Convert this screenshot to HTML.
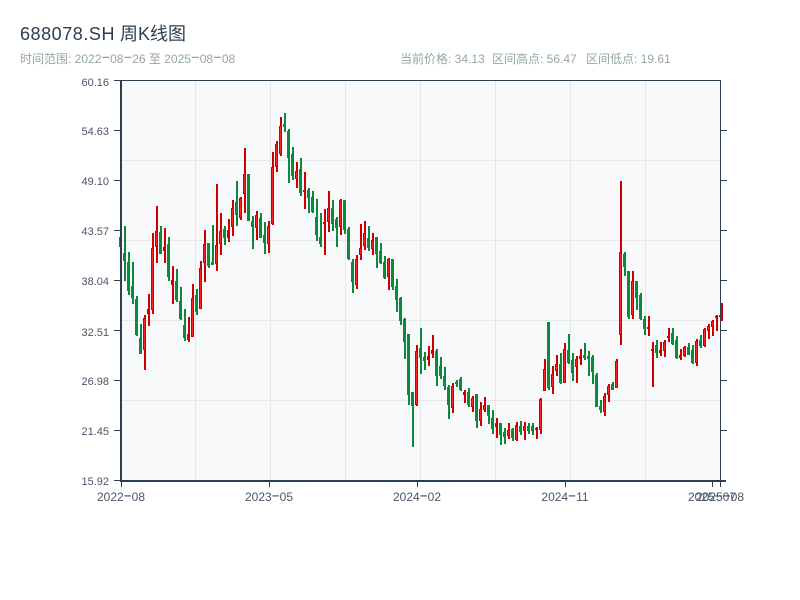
<!DOCTYPE html>
<html lang="zh">
<head>
<meta charset="utf-8">
<title>688078.SH 周K线图</title>
<style>
html,body{margin:0;padding:0;background:#fff;width:800px;height:600px;overflow:hidden}
svg{display:block;position:absolute;left:0;top:0}
text{font-family:"Liberation Sans","WenQuanYi Zen Hei","Noto Sans CJK SC",sans-serif}
.h{font-family:"IPAGothic",sans-serif;font-size:16px}
.k{font-family:"IPAGothic",sans-serif;font-size:17.5px}
</style>
</head>
<body>
<svg width="800" height="600" viewBox="0 0 800 600" xmlns="http://www.w3.org/2000/svg">
<text x="20" y="40" font-size="18" fill="#2c3e50"><tspan letter-spacing="0.55">688078.SH</tspan> 周K线图</text>
<text x="20" y="63" font-size="12" fill="#95a5a6">时间范围: 2022<tspan class="k" dy="1">-</tspan><tspan dy="-1">08</tspan><tspan class="k" dy="1">-</tspan><tspan dy="-1">26 至 2025</tspan><tspan class="k" dy="1">-</tspan><tspan dy="-1">08</tspan><tspan class="k" dy="1">-</tspan><tspan dy="-1">08</tspan></text>
<text x="400" y="63" font-size="12" fill="#95a5a6">当前价格: 34.13</text>
<text x="492" y="63" font-size="12" fill="#95a5a6">区间高点: 56.47</text>
<text x="586" y="63" font-size="12" fill="#95a5a6">区间低点: 19.61</text>

<rect x="120" y="80" width="600" height="400" fill="#f8f9fa"/>
<path d="M120 160.5H720M120 240.5H720M120 320.5H720M120 400.5H720M195.5 80V480M270.5 80V480M345.5 80V480M420.5 80V480M495.5 80V480M570.5 80V480M645.5 80V480" stroke="#e5e7eb" stroke-width="1" fill="none"/>

<g shape-rendering="crispEdges">
<path fill="#0a8a3c" d="M119 237h3V247h-3z
M124 226h2V281h-2zM123 253h3V261h-3z
M128 252h2V295h-2zM127 262h3V291h-3z
M132 262h2V304h-2zM131 286h3V298h-3z
M136 296h2V336h-2zM135 299h3V335h-3z
M140 324h2V354h-2zM139 338h3V354h-3z
M160 226h2V254h-2zM159 232h3V254h-3z
M168 237h2V281h-2zM167 244h3V277h-3z
M176 269h2V302h-2zM175 281h3V300h-3z
M180 287h2V320h-2zM179 301h3V319h-3z
M184 309h2V341h-2zM183 325h3V338h-3z
M196 289h2V315h-2zM195 295h3V312h-3z
M208 243h2V268h-2zM207 243h3V266h-3z
M212 225h2V265h-2zM211 262h3V265h-3z
M224 226h2V245h-2zM223 229h3V238h-3z
M236 181h2V226h-2zM235 202h3V215h-3z
M248 174h2V221h-2zM247 174h3V221h-3z
M252 216h2V249h-2zM251 221h3V227h-3z
M260 213h2V238h-2zM259 218h3V238h-3z
M264 222h2V254h-2zM263 235h3V243h-3z
M284 113h2V132h-2zM283 124h3V127h-3z
M288 129h2V183h-2zM287 131h3V158h-3z
M292 147h2V180h-2zM291 154h3V176h-3z
M300 158h2V196h-2zM299 169h3V193h-3z
M308 188h2V213h-2zM307 190h3V198h-3z
M312 191h2V213h-2zM311 197h3V212h-3z
M316 199h2V241h-2zM315 217h3V235h-3z
M320 213h2V247h-2zM319 237h3V244h-3z
M332 200h2V231h-2zM331 208h3V224h-3z
M336 217h2V247h-2zM335 219h3V228h-3z
M344 200h2V234h-2zM343 200h3V230h-3z
M348 227h2V260h-2zM347 229h3V259h-3z
M352 259h2V293h-2zM351 262h3V282h-3z
M368 226h2V251h-2zM367 238h3V248h-3z
M376 237h2V268h-2zM375 237h3V254h-3z
M380 243h2V264h-2zM379 251h3V263h-3z
M384 256h2V279h-2zM383 262h3V278h-3z
M392 259h2V290h-2zM391 259h3V287h-3z
M396 279h2V312h-2zM395 286h3V300h-3z
M400 297h2V325h-2zM399 298h3V321h-3z
M404 318h2V359h-2zM403 319h3V342h-3z
M408 334h2V405h-2zM407 334h3V395h-3z
M412 392h2V447h-2zM411 392h3V406h-3z
M420 328h2V374h-2zM419 348h3V358h-3z
M424 352h2V370h-2zM423 357h3V361h-3z
M436 349h2V386h-2zM435 351h3V376h-3z
M440 357h2V379h-2zM439 366h3V376h-3z
M444 367h2V390h-2zM443 376h3V386h-3z
M448 385h2V419h-2zM447 387h3V405h-3z
M456 380h2V387h-2zM455 382h3V384h-3z
M460 377h2V391h-2zM459 379h3V390h-3z
M468 388h2V407h-2zM467 392h3V405h-3z
M476 394h2V428h-2zM475 394h3V421h-3z
M488 405h2V424h-2zM487 405h3V416h-3z
M492 410h2V434h-2zM491 418h3V429h-3z
M500 423h2V445h-2zM499 423h3V435h-3z
M504 428h2V444h-2zM503 432h3V437h-3z
M512 428h2V441h-2zM511 429h3V438h-3z
M520 421h2V435h-2zM519 426h3V432h-3z
M528 423h2V434h-2zM527 426h3V431h-3z
M532 423h2V435h-2zM531 426h3V431h-3z
M548 322h2V390h-2zM547 322h3V388h-3z
M560 353h2V384h-2zM559 364h3V383h-3z
M568 334h2V364h-2zM567 350h3V363h-3z
M572 353h2V381h-2zM571 360h3V373h-3z
M584 343h2V360h-2zM583 355h3V358h-3z
M588 351h2V376h-2zM587 356h3V359h-3z
M592 355h2V384h-2zM591 357h3V372h-3z
M596 373h2V407h-2zM595 375h3V407h-3z
M600 400h2V413h-2zM599 406h3V410h-3z
M612 382h2V390h-2zM611 384h3V390h-3z
M624 252h2V276h-2zM623 254h3V267h-3z
M628 271h2V319h-2zM627 271h3V317h-3z
M636 281h2V310h-2zM635 281h3V298h-3z
M640 293h2V320h-2zM639 295h3V319h-3z
M644 316h2V335h-2zM643 319h3V329h-3z
M656 340h2V358h-2zM655 345h3V353h-3z
M672 328h2V345h-2zM671 333h3V344h-3z
M676 336h2V359h-2zM675 340h3V358h-3z
M688 343h2V355h-2zM687 347h3V355h-3z
M692 345h2V364h-2zM691 350h3V363h-3z
M700 335h2V348h-2zM699 340h3V346h-3z"/>
<path fill="#cc0000" d="M144 315h2V370h-2zM143 318h3V350h-3z
M148 294h2V326h-2zM147 309h3V314h-3z
M152 233h2V314h-2zM151 248h3V310h-3z
M156 206h2V263h-2zM155 231h3V247h-3z
M164 228h2V263h-2zM163 247h3V251h-3z
M172 266h2V304h-2zM171 280h3V285h-3z
M188 317h2V342h-2zM187 334h3V340h-3z
M192 284h2V337h-2zM191 298h3V337h-3z
M200 261h2V309h-2zM199 268h3V309h-3z
M204 230h2V282h-2zM203 244h3V263h-3z
M216 184h2V271h-2zM215 245h3V264h-3z
M220 213h2V255h-2zM219 231h3V244h-3z
M228 219h2V242h-2zM227 230h3V238h-3z
M232 200h2V236h-2zM231 208h3V227h-3z
M240 197h2V220h-2zM239 198h3V218h-3z
M244 148h2V213h-2zM243 174h3V194h-3z
M256 211h2V240h-2zM255 215h3V228h-3z
M268 221h2V253h-2zM267 226h3V244h-3z
M272 152h2V225h-2zM271 167h3V224h-3z
M276 141h2V172h-2zM275 144h3V167h-3z
M280 117h2V156h-2zM279 126h3V154h-3z
M296 162h2V188h-2zM295 171h3V179h-3z
M304 172h2V209h-2zM303 190h3V192h-3z
M324 209h2V255h-2zM323 222h3V224h-3z
M328 191h2V232h-2zM327 208h3V222h-3z
M340 199h2V235h-2zM339 200h3V227h-3z
M356 255h2V289h-2zM355 259h3V285h-3z
M360 224h2V260h-2zM359 248h3V255h-3z
M364 221h2V250h-2zM363 233h3V246h-3z
M372 233h2V255h-2zM371 240h3V249h-3z
M388 258h2V290h-2zM387 259h3V277h-3z
M416 345h2V406h-2zM415 351h3V405h-3z
M428 346h2V366h-2zM427 356h3V360h-3z
M432 335h2V358h-2zM431 350h3V354h-3z
M452 383h2V413h-2zM451 386h3V408h-3z
M464 390h2V403h-2zM463 392h3V395h-3z
M472 396h2V412h-2zM471 398h3V407h-3z
M480 402h2V426h-2zM479 409h3V421h-3z
M484 397h2V412h-2zM483 405h3V410h-3z
M496 418h2V438h-2zM495 423h3V427h-3z
M508 423h2V439h-2zM507 430h3V436h-3z
M516 422h2V441h-2zM515 425h3V440h-3z
M524 422h2V440h-2zM523 426h3V431h-3z
M536 427h2V439h-2zM535 428h3V430h-3z
M540 398h2V434h-2zM539 399h3V430h-3z
M544 359h2V391h-2zM543 369h3V391h-3z
M552 366h2V394h-2zM551 374h3V387h-3z
M556 355h2V376h-2zM555 364h3V371h-3z
M564 343h2V383h-2zM563 349h3V383h-3z
M576 356h2V383h-2zM575 359h3V367h-3z
M580 349h2V365h-2zM579 356h3V359h-3z
M604 393h2V416h-2zM603 396h3V412h-3z
M608 384h2V402h-2zM607 386h3V395h-3z
M616 359h2V388h-2zM615 361h3V388h-3z
M620 181h2V345h-2zM619 252h3V335h-3z
M632 271h2V319h-2zM631 281h3V315h-3z
M648 316h2V336h-2zM647 327h3V329h-3z
M652 342h2V387h-2zM651 349h3V351h-3z
M660 342h2V356h-2zM659 350h3V353h-3z
M664 340h2V357h-2zM663 342h3V351h-3z
M668 328h2V342h-2zM667 336h3V338h-3z
M680 349h2V360h-2zM679 355h3V358h-3z
M684 346h2V357h-2zM683 347h3V356h-3z
M696 339h2V366h-2zM695 341h3V363h-3z
M704 328h2V347h-2zM703 329h3V346h-3z
M708 324h2V339h-2zM707 326h3V331h-3z
M712 320h2V336h-2zM711 321h3V327h-3z
M716 315h2V331h-2zM715 316h3V318h-3z
M721 303h2V321h-2zM719 315h3V317h-3z"/>
<path fill="#ff2222" d="M144 319h1V349h-1zM152 249h1V309h-1zM156 232h1V246h-1zM192 299h1V336h-1zM200 269h1V308h-1zM204 245h1V262h-1zM216 246h1V263h-1zM220 232h1V243h-1zM232 209h1V226h-1zM240 199h1V217h-1zM244 175h1V193h-1zM256 216h1V227h-1zM268 227h1V243h-1zM272 168h1V223h-1zM276 145h1V166h-1zM280 127h1V153h-1zM296 172h1V178h-1zM328 209h1V221h-1zM340 201h1V226h-1zM356 260h1V284h-1zM360 249h1V254h-1zM364 234h1V245h-1zM372 241h1V248h-1zM388 260h1V276h-1zM416 352h1V404h-1zM452 387h1V407h-1zM472 399h1V406h-1zM480 410h1V420h-1zM484 406h1V409h-1zM508 431h1V435h-1zM516 426h1V439h-1zM524 427h1V430h-1zM540 400h1V429h-1zM544 370h1V390h-1zM552 375h1V386h-1zM556 365h1V370h-1zM564 350h1V382h-1zM576 360h1V366h-1zM604 397h1V411h-1zM608 387h1V394h-1zM616 362h1V387h-1zM620 253h1V334h-1zM632 282h1V314h-1zM664 343h1V350h-1zM684 348h1V355h-1zM696 342h1V362h-1zM704 330h1V345h-1zM708 327h1V330h-1zM712 322h1V326h-1z"/>
</g>

<g shape-rendering="crispEdges" fill="#2c3e50">
<rect x="120" y="80" width="601" height="1"/>
<rect x="120" y="80" width="2" height="402"/>
<rect x="120" y="480" width="606" height="2"/>
<rect x="720" y="80" width="1" height="401"/>
<path d="M114 80h6v1h-6zM114 130h6v1h-6zM114 180h6v1h-6zM114 230h6v1h-6zM114 280h6v1h-6zM114 330h6v1h-6zM114 380h6v1h-6zM114 430h6v1h-6zM114 480h6v1h-6z"/>
<path d="M721 130h6v1h-6zM721 180h6v1h-6zM721 230h6v1h-6zM721 280h6v1h-6zM721 330h6v1h-6zM721 380h6v1h-6zM721 430h6v1h-6z"/>
<path d="M121 482h1v5h-1zM269 482h1v5h-1zM417 482h1v5h-1zM565 482h1v5h-1zM712 482h1v5h-1zM720 482h1v5h-1z"/>
</g>

<g font-size="11" fill="#4a5568" text-anchor="end">
<text x="109" y="86">60.16</text>
<text x="109" y="135">54.63</text>
<text x="109" y="185">49.10</text>
<text x="109" y="235">43.57</text>
<text x="109" y="285">38.04</text>
<text x="109" y="336">32.51</text>
<text x="109" y="385">26.98</text>
<text x="109" y="435">21.45</text>
<text x="109" y="485">15.92</text>
</g>
<g font-size="12" fill="#4a5568" text-anchor="middle">
<text x="121" y="501">2022<tspan class="h" dy="1">-</tspan><tspan dy="-1">08</tspan></text>
<text x="269" y="501">2023<tspan class="h" dy="1">-</tspan><tspan dy="-1">05</tspan></text>
<text x="417" y="501">2024<tspan class="h" dy="1">-</tspan><tspan dy="-1">02</tspan></text>
<text x="565" y="501">2024<tspan class="h" dy="1">-</tspan><tspan dy="-1">11</tspan></text>
<text x="712" y="501">2025<tspan class="h" dy="1">-</tspan><tspan dy="-1">07</tspan></text>
<text x="720" y="501">2025<tspan class="h" dy="1">-</tspan><tspan dy="-1">08</tspan></text>
</g>
</svg>
</body>
</html>
